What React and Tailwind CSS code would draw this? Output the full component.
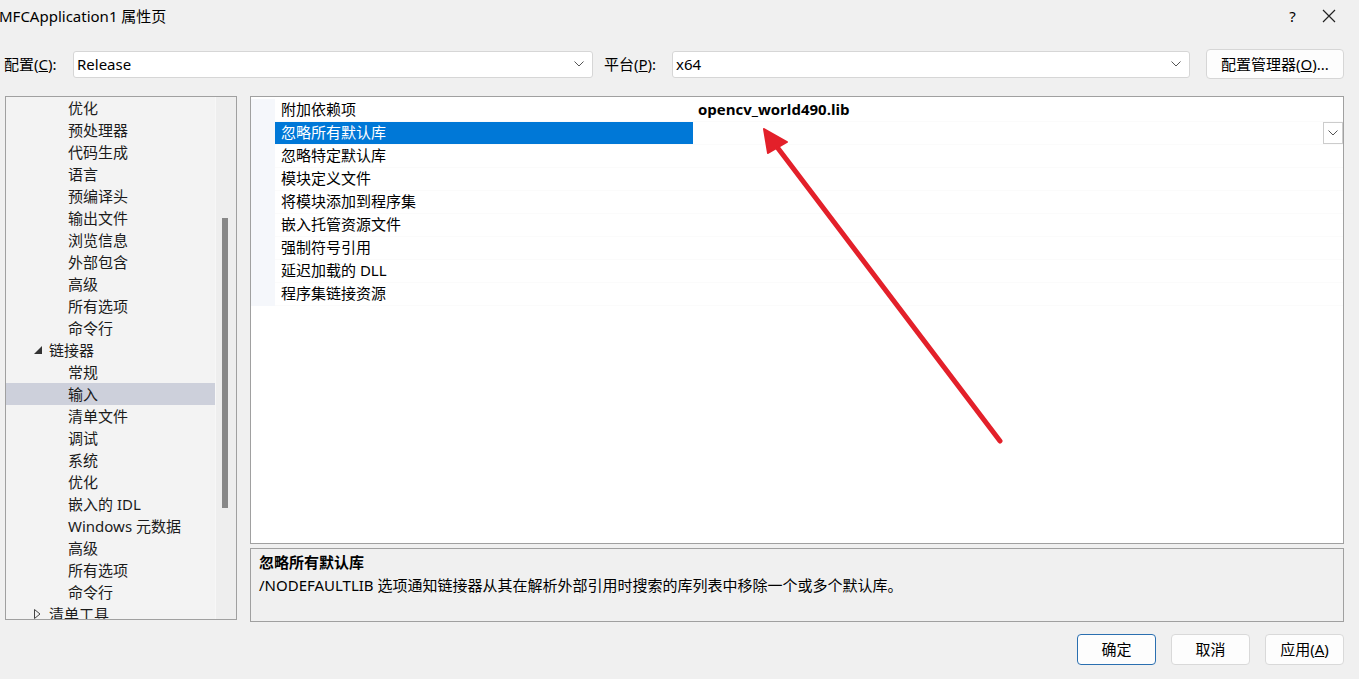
import React from "react";

const treeItems = [
  { label: "优化", level: 2 },
  { label: "预处理器", level: 2 },
  { label: "代码生成", level: 2 },
  { label: "语言", level: 2 },
  { label: "预编译头", level: 2 },
  { label: "输出文件", level: 2 },
  { label: "浏览信息", level: 2 },
  { label: "外部包含", level: 2 },
  { label: "高级", level: 2 },
  { label: "所有选项", level: 2 },
  { label: "命令行", level: 2 },
  { label: "链接器", level: 1, open: true },
  { label: "常规", level: 2 },
  { label: "输入", level: 2, selected: true },
  { label: "清单文件", level: 2 },
  { label: "调试", level: 2 },
  { label: "系统", level: 2 },
  { label: "优化", level: 2 },
  { label: "嵌入的 IDL", level: 2 },
  { label: "Windows 元数据", level: 2 },
  { label: "高级", level: 2 },
  { label: "所有选项", level: 2 },
  { label: "命令行", level: 2 },
  { label: "清单工具", level: 1, open: false },
];

const props = [
  { name: "附加依赖项", value: "opencv_world490.lib" },
  { name: "忽略所有默认库", selected: true },
  { name: "忽略特定默认库" },
  { name: "模块定义文件" },
  { name: "将模块添加到程序集" },
  { name: "嵌入托管资源文件" },
  { name: "强制符号引用" },
  { name: "延迟加载的 DLL" },
  { name: "程序集链接资源" },
];

const Chevron = () => (
  <svg width="10" height="6" viewBox="0 0 10 6" className="text-[#555]">
    <path d="M0.5 0.5 L5 5 L9.5 0.5" fill="none" stroke="currentColor" strokeWidth="1" />
  </svg>
);

// combo box in the config row
const Combo = ({ value, width }) => (
  <div className={`flex items-center justify-between h-[27px] bg-white border border-[#d6d6d6] rounded-[3px] pl-[3px] pr-[8px] ${width}`}>
    <span className="text-[15px] text-black">{value}</span>
    <Chevron />
  </div>
);

const Button = ({ children, primary }) => (
  <div
    className={`flex items-center justify-center w-[79px] h-[31px] bg-[#fdfdfd] rounded-[4px] text-[15px] text-black ${
      primary ? "border border-[#2a6fb0]" : "border border-[#d9d9d9]"
    }`}
  >
    {children}
  </div>
);

export default function App() {
  return (
    <div className="relative w-[1359px] h-[679px] overflow-hidden bg-[#f0f0f0] text-black font-['Noto_Sans','Noto_Sans_CJK_SC',sans-serif]">
      {/* title bar */}
      <div className="flex items-center justify-between h-[32px]">
        <span className="text-[15px] leading-none -ml-[1px]">MFCApplication1 属性页</span>
        <div className="flex items-center h-full">
          <span className="w-[57px] text-center text-[15px]">?</span>
          <svg width="14" height="14" viewBox="0 0 14 14" className="mr-[23px] ml-[1px]">
            <path d="M1 1 L13 13 M13 1 L1 13" stroke="#222" strokeWidth="1.2" />
          </svg>
        </div>
      </div>

      {/* config row */}
      <div className="flex items-center h-[30px] mt-[17px] pl-[4px]">
        <span className="text-[15px] w-[69px]">
          配置(<span className="underline">C</span>):
        </span>
        <Combo value="Release" width="w-[520px]" />
        <span className="text-[15px] ml-[11px] w-[68px]">
          平台(<span className="underline">P</span>):
        </span>
        <Combo value="x64" width="w-[518px]" />
        <div className="ml-[16px] flex items-center justify-center w-[138px] h-[30px] bg-[#fdfdfd] border border-[#d6d6d6] rounded-[4px] text-[15px]">
          配置管理器(<span className="underline">O</span>)...
        </div>
      </div>

      {/* main area */}
      <div className="flex mt-[17px] h-[526px]">
        {/* tree */}
        <div className="ml-[5px] w-[232px] h-[524px] border border-[#a0a0a0] bg-[#f3f3f3] flex overflow-hidden">
          <div className="w-[209px] flex flex-col text-[15px] text-[#1b1b1b]">
            {treeItems.map((it, i) => (
              <div
                key={i}
                className={`flex items-center h-[22px] leading-[20px] shrink-0 ${it.selected ? "bg-[#cdd0db]" : ""} ${
                  it.level === 2 ? "pl-[62px]" : "pl-[28px]"
                }`}
              >
                {it.level === 1 && (
                  <span className="w-[15px] flex items-center">
                    {it.open ? (
                      <svg width="8" height="8" viewBox="0 0 8 8">
                        <path d="M8 0 L8 8 L0 8 Z" fill="#333" />
                      </svg>
                    ) : (
                      <svg width="7" height="10" viewBox="0 0 7 10">
                        <path d="M0.5 0.5 L6 5 L0.5 9.5 Z" fill="none" stroke="#444" />
                      </svg>
                    )}
                  </span>
                )}
                <span className="-mt-[1px]">{it.label}</span>
              </div>
            ))}
          </div>
          <div className="flex-1 bg-[#eeeeee] border-l border-[#f7f7f7]">
            <div className="ml-[6px] mt-[121px] w-[6px] h-[290px] bg-[#888888]" />
          </div>
        </div>

        {/* right column */}
        <div className="ml-[13px] w-[1094px] flex flex-col">
          {/* property grid */}
          <div className="relative h-[448px] border border-[#a0a0a0] bg-white flex">
            <div className="w-[24px] h-[207px] mt-[2px] bg-[#f5f7fb]" />
            <div className="flex-1 flex flex-col pt-[2px]">
              {props.map((p, i) => (
                <div key={i} className="flex h-[23px] text-[15px] border-b border-[#fbfbfb]">
                  <div
                    className={`w-[418px] flex items-center pl-[6px] ${
                      p.selected ? "bg-[#0078d7] text-white" : "text-black"
                    }`}
                  >
                    <span className="-mt-[1px]">{p.name}</span>
                  </div>
                  <div className="flex-1 flex items-center justify-between pl-[5px]">
                    <span className="font-bold text-[15px] -mt-[1px] font-['Open_Sans',sans-serif]">{p.value}</span>
                    {p.selected && (
                      <div className="w-[20px] h-[22px] border border-[#cccccc] bg-white flex items-center justify-center">
                        <Chevron />
                      </div>
                    )}
                  </div>
                </div>
              ))}
            </div>
          </div>

          {/* description */}
          <div className="mt-[4px] h-[74px] border border-[#a0a0a0] pl-[8px] pt-[3px] flex flex-col">
            <span className="text-[15px] font-bold leading-[20px]">忽略所有默认库</span>
            <span className="text-[15px] leading-[20px] mt-[3px]">
              /NODEFAULTLIB 选项通知链接器从其在解析外部引用时搜索的库列表中移除一个或多个默认库。
            </span>
          </div>
        </div>
      </div>

      {/* bottom buttons */}
      <div className="flex justify-end gap-[15px] mt-[12px] pr-[15px]">
        <Button primary>确定</Button>
        <Button>取消</Button>
        <Button>
          应用(<span className="underline">A</span>)
        </Button>
      </div>

      {/* red annotation arrow */}
      <svg className="absolute left-0 top-0 pointer-events-none" width="1359" height="679">
        <line x1="1000" y1="441" x2="774" y2="143" stroke="#e3202a" strokeWidth="5" strokeLinecap="round" />
        <path d="M764 129 L787 142 L768 153 Z" fill="#e3202a" stroke="#e3202a" strokeWidth="2" strokeLinejoin="round" />
      </svg>
    </div>
  );
}
